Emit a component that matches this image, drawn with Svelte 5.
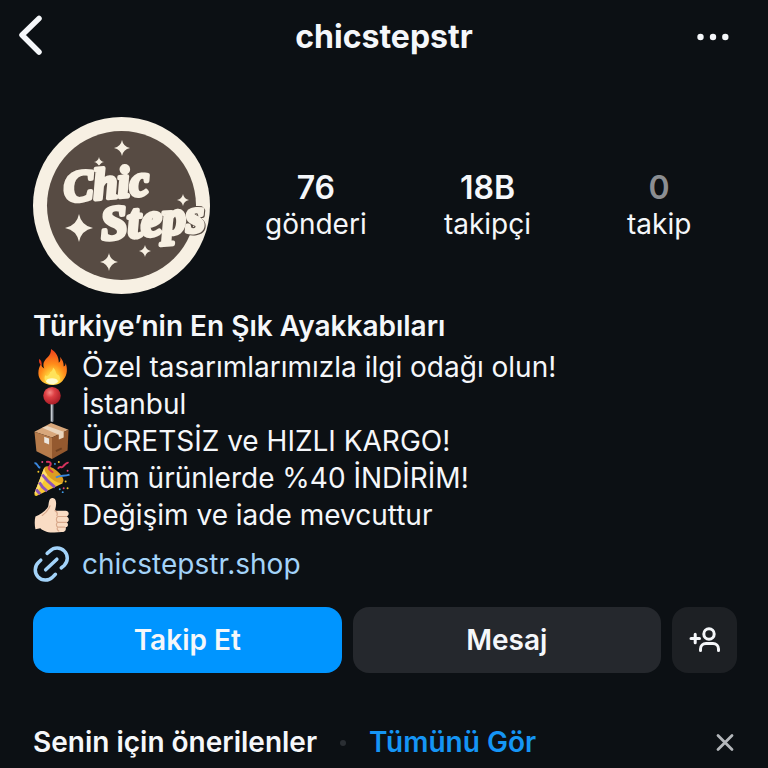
<script lang="ts">
  // Profile header for a shop account: top bar, stats, bio, actions
  // and the first line of the suggestions block.

  type Stat = { value: string; label: string; muted?: boolean };

  const stats: Stat[] = [
    { value: '76', label: 'gönderi' },
    { value: '18B', label: 'takipçi' },
    { value: '0', label: 'takip', muted: true },
  ];

  const bio = [
    { icon: 'fire', text: 'Özel tasarımlarımızla ilgi odağı olun!' },
    { icon: 'pin', text: 'İstanbul' },
    { icon: 'box', text: 'ÜCRETSİZ ve HIZLI KARGO!' },
    { icon: 'party', text: 'Tüm ürünlerde %40 İNDİRİM!' },
    { icon: 'thumb', text: 'Değişim ve iade mevcuttur' },
  ];

  // centre and half-extents of each four-point sparkle on the logo
  const sparkles = [
    { x: 89, y: 31, r: 8 },
    { x: 66, y: 45, r: 5 },
    { x: 150, y: 83, r: 6 },
    { x: 46, y: 111, r: 14 },
    { x: 112, y: 134, r: 6 },
    { x: 76, y: 145, r: 9 },
  ];

  function sparkle(x: number, y: number, r: number) {
    const k = r * 0.16;
    return `M${x} ${y - r}Q${x + k} ${y - k} ${x + r} ${y}Q${x + k} ${y + k} ${x} ${y + r}Q${x - k} ${y + k} ${x - r} ${y}Q${x - k} ${y - k} ${x} ${y - r}Z`;
  }
</script>

<div class="page">
  <header class="topbar">
    <button class="icon-btn back" aria-label="Geri">
      <svg width="26" height="42" viewBox="0 0 26 42" fill="none" stroke="currentColor" stroke-width="5.500" stroke-linecap="round" stroke-linejoin="round">
        <path d="M21 3.500 4 20 21 37" />
      </svg>
    </button>
    <h1>chicstepstr</h1>
    <button class="icon-btn more" aria-label="Seçenekler">
      <svg width="32" height="10" viewBox="0 0 32 10" fill="currentColor">
        <circle cx="3.500" cy="6" r="3.200" />
        <circle cx="16" cy="6" r="3.200" />
        <circle cx="28.300" cy="6" r="3.200" />
      </svg>
    </button>
  </header>

  <main>
    <section class="summary">
      <svg class="avatar" viewBox="0 0 177 177" role="img" aria-label="Chic Steps">
        <circle cx="88.500" cy="88.500" r="88.500" fill="#f7f0e3" />
        <circle cx="88.500" cy="88.500" r="74.500" fill="#574b43" />
        {#each sparkles as s}
          <path d={sparkle(s.x, s.y, s.r)} fill="#f7f0e3" />
        {/each}
        <g class="lettering">
          <text x="32" y="85" font-size="44" transform="rotate(-5 32 85)">Chic</text>
          <text x="69" y="123" font-size="48" transform="rotate(-5 69 123)">Steps</text>
        </g>
      </svg>
      <ul class="stats">
        {#each stats as stat}
          <li>
            <strong class:muted={stat.muted}>{stat.value}</strong>
            <span>{stat.label}</span>
          </li>
        {/each}
      </ul>
    </section>

    <h2>Türkiye’nin En Şık Ayakkabıları</h2>

    <ul class="bio">
      {#each bio as line}
        <li>
          <svg class="emoji" viewBox="0 0 38 38" aria-hidden="true">
            {#if line.icon === 'fire'}
              <defs>
                <radialGradient id="flame" cx="50%" cy="88%" r="85%">
                  <stop offset="0" stop-color="#fff3a0" />
                  <stop offset="0.250" stop-color="#ffd43b" />
                  <stop offset="0.550" stop-color="#ff8c1a" />
                  <stop offset="1" stop-color="#f0431c" />
                </radialGradient>
              </defs>
              <path fill="url(#flame)" d="M18 0C23 3 26 8 26 14C28 13 28 10 27 8C31 12 31 16 31 18C33 17 33 15 33 14C35 20 35 26 31 31C28 36 23 37 19 37C11 37 5 32 5 25C5 21 6 18 8 15C8 18 9 19 11 20C9 15 11 12 14 9C17 6 18 4 18 0Z" />
              <path fill="#e2381b" d="M6 10C8 12 9 14 8 17C6 15 5 13 6 10Z" />
              <path fill="#ffe25a" d="M20 19C24 22 22 26 26 27C29 31 26 36 20 36C13 36 10 32 12 27C15 29 17 26 17 24C19 23 20 21 20 19Z" />
              <ellipse cx="19" cy="33" rx="6" ry="3" fill="#fffbd0" />
            {:else if line.icon === 'pin'}
              <defs>
                <radialGradient id="pinhead" cx="38%" cy="32%" r="70%">
                  <stop offset="0" stop-color="#f68a86" />
                  <stop offset="0.400" stop-color="#dd3f43" />
                  <stop offset="1" stop-color="#a81c26" />
                </radialGradient>
              </defs>
              <rect x="17.500" y="17" width="3" height="20" rx="1" fill="#8d939c" />
              <path d="M18.500 18V36" stroke="#c9ced4" />
              <circle cx="19" cy="10" r="9" fill="url(#pinhead)" />
            {:else if line.icon === 'box'}
              <path fill="#d8a77b" d="M1 9 18 0 36 7 19 15Z" />
              <path fill="#b67b4b" d="M1 9 19 15V37L3 29Z" />
              <path fill="#94592f" d="M19 15 36 7 35 28 19 37Z" />
              <path fill="#ead5bd" d="M9 5 14 3 31 9V15L26 17V12Z" />
              <path fill="#ece6de" d="M11 14 16 16V22L11 20Z" />
              <path d="M23 29 29 26" stroke="#70401f" stroke-width="2" />
            {:else if line.icon === 'party'}
              <path fill="#f8c832" d="M11 8C18 8 29 16 30 24L3 37C1 37 1 36 1 34Z" />
              <path fill="#ffe06a" d="M11 8 17 10 3 35 1 34Z" />
              <path fill="none" stroke="#8e55b8" stroke-width="3" d="M9 15C12 19 18 25 22 28M6 23C8 27 11 30 14 32M3 30C4 33 6 34 7 35" />
              <ellipse cx="21" cy="15" rx="12" ry="5" transform="rotate(40 21 15)" fill="#dd9d21" />
              <path fill="none" stroke="#d5325c" stroke-width="2" d="M13 2C18 1 19 4 16 7C14 10 19 11 20 13M25 9C28 5 28 9 30 7C33 4 34 2 36 3" />
              <path fill="none" stroke="#3a86dd" stroke-width="2" d="M1 3C5 3 3 7 7 8M23 18C27 15 31 17 37 15" />
              <g fill="#f5c62c">
                <circle cx="26" cy="2" r="1" /><circle cx="33" cy="22" r="1" />
                <circle cx="35" cy="29" r="1" /><circle cx="5" cy="12" r="1" />
              </g>
              <g fill="#e2487c">
                <circle cx="9" cy="2" r="1" /><circle cx="31" cy="29" r="1" /><circle cx="35" cy="11" r="1" />
              </g>
              <g fill="#3e9ae8">
                <circle cx="22" cy="4" r="1" /><circle cx="27" cy="30" r="1" /><circle cx="30" cy="33" r="1" />
              </g>
            {:else}
              <path fill="#f9dcc4" d="M2 20C7 18 12 15 15 10C16 7 15 2 19 1C24 1 24 7 22 14H33C37 14 37 19 34 20C37 21 37 25 34 26C36 27 36 31 33 31C34 34 32 36 29 36C21 37 12 37 7 32L2 33C1 29 1 24 2 20Z" />
              <path fill="none" stroke="#d9a98c" stroke-width="1.200" stroke-linecap="round" d="M22 14C24 15 25 17 24 19M25 20H34M25 26H34M25 31H32M25 20C23 21 23 25 25 26C23 27 23 30 25 31C24 32 24 34 26 35M17 9C15 14 12 17 9 19" />
            {/if}
          </svg>
          <span>{line.text}</span>
        </li>
      {/each}
    </ul>

    <a class="site" href="#shop">
      <svg class="emoji" viewBox="0 0 38 38" fill="none" stroke="currentColor" stroke-width="3.600" stroke-linecap="round" aria-hidden="true">
        <path d="M14 7.500 17 5A10.300 10.300 0 0 1 31.500 20L28.500 22.500" />
        <path d="M7.500 14.500 5 17A10.300 10.300 0 0 0 19.500 32L22.500 29" />
        <path d="M12.500 24.500 24 13.500" />
      </svg>
      <span>chicstepstr.shop</span>
    </a>

    <div class="actions">
      <button class="btn primary">Takip Et</button>
      <button class="btn">Mesaj</button>
      <button class="btn square" aria-label="Kişi öner">
        <svg width="32" height="26" viewBox="0 0 32 26" fill="none" stroke="currentColor" stroke-width="3" stroke-linecap="round">
          <path d="M2 11.500H10.500M6.200 7.200V15.800" />
          <circle cx="20" cy="7" r="5.200" />
          <path d="M11.500 23.500V22A5.500 5.500 0 0 1 17 16.500H24A5.500 5.500 0 0 1 29.500 22V23.500" />
        </svg>
      </button>
    </div>

    <section class="suggested">
      <h3>Senin için önerilenler</h3>
      <span class="dot"></span>
      <a href="#all">Tümünü Gör</a>
      <button class="icon-btn close" aria-label="Kapat">
        <svg width="20" height="20" viewBox="0 0 20 20" stroke="currentColor" stroke-width="2.800" stroke-linecap="round">
          <path d="M3 2.500 17 16.500M17 2.500 3 16.500" />
        </svg>
      </button>
    </section>
  </main>
</div>

<style>
  :global(body) {
    margin: 0;
    background: #0c1014;
  }

  .page {
    color: #f5f7fa;
    background: #0c1014;
    font-family: Inter, Roboto, 'Liberation Sans', sans-serif;
    font-size: 28px;
    line-height: 37px;
  }

  h1, h2, h3, ul {
    margin: 0;
    padding: 0;
    font-size: inherit;
    list-style: none;
  }

  button {
    font: inherit;
    color: inherit;
    border: 0;
    cursor: pointer;
  }

  a {
    text-decoration: none;
  }

  svg {
    display: block;
    flex: none;
  }

  .icon-btn {
    padding: 0;
    background: none;
  }

  /* top bar */
  .topbar {
    display: grid;
    grid-template-columns: 1fr auto 1fr;
    align-items: center;
    height: 72px;
    padding: 0 39px 0 18px;
  }
  .topbar h1 {
    font-size: 32px;
    font-weight: 700;
    padding-left: 21px;
  }
  .more {
    justify-self: end;
  }
  .back {
    justify-self: start;
  }

  main {
    padding: 45px 31px 6px 33px;
  }

  /* avatar and counters */
  .summary {
    display: flex;
    align-items: center;
    gap: 20px;
  }
  .avatar {
    width: 177px;
    height: 177px;
  }
  .lettering {
    font-family: 'Liberation Serif', serif;
    font-weight: 700;
    font-style: italic;
    fill: #f7f0e3;
    stroke: #f7f0e3;
    stroke-width: 4px;
    stroke-linejoin: round;
    /* brown edge, visible only where the last letter crosses the ring */
    filter: drop-shadow(1px 1px 0 #574b43) drop-shadow(-1px -1px 0 #574b43);
  }
  .stats {
    flex: 1;
    display: grid;
    grid-template-columns: repeat(3, 1fr);
    margin-right: -8px;
    text-align: center;
  }
  .stats li {
    display: flex;
    flex-direction: column;
  }
  .stats strong {
    font-size: 32px;
    font-weight: 600;
  }
  .stats .muted {
    color: #8b8e92;
  }

  h2 {
    margin-top: 14px;
    font-weight: 600;
  }

  .bio {
    margin-top: 4px;
  }
  .bio li,
  .site {
    display: flex;
    align-items: center;
    gap: 11px;
  }
  .emoji {
    width: 38px;
    height: 37px;
  }
  .site {
    margin-top: 12px;
    color: #a3d3f9;
  }

  /* buttons */
  .actions {
    display: flex;
    gap: 11px;
    margin-top: 24px;
  }
  .btn {
    flex: 1;
    height: 66px;
    padding: 0;
    border-radius: 16px;
    background: #25282d;
    font-weight: 600;
  }
  .btn.primary {
    background: #0095ff;
  }
  .btn.square {
    flex: 0 0 65px;
    display: grid;
    place-items: center;
    background: #1d2024;
  }

  /* suggestions */
  .suggested {
    display: flex;
    align-items: center;
    margin-top: 51px;
  }
  .suggested h3 {
    font-weight: 600;
  }
  .suggested a {
    color: #1595f5;
    font-weight: 600;
  }
  .dot {
    width: 6px;
    height: 6px;
    margin: 0 23px;
    border-radius: 50%;
    background: #2a2e33;
  }
  .close {
    margin-left: auto;
    margin-right: 2px;
    color: #b4b7bb;
  }
</style>
